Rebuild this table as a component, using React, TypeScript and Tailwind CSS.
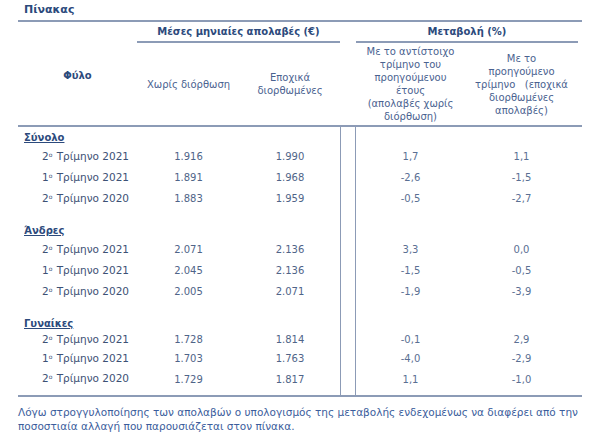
const sections = [
  {
    name: "Σύνολο",
    rows: [
      ["2", "2021", "1.916", "1.990", "1,7", "1,1"],
      ["1", "2021", "1.891", "1.968", "-2,6", "-1,5"],
      ["2", "2020", "1.883", "1.959", "-0,5", "-2,7"],
    ],
  },
  {
    name: "Άνδρες",
    rows: [
      ["2", "2021", "2.071", "2.136", "3,3", "0,0"],
      ["1", "2021", "2.045", "2.136", "-1,5", "-0,5"],
      ["2", "2020", "2.005", "2.071", "-1,9", "-3,9"],
    ],
  },
  {
    name: "Γυναίκες",
    rows: [
      ["2", "2021", "1.728", "1.814", "-0,1", "2,9"],
      ["1", "2021", "1.703", "1.763", "-4,0", "-2,9"],
      ["2", "2020", "1.729", "1.817", "1,1", "-1,0"],
    ],
  },
];

const cols = "grid grid-cols-[119px_103px_100px_16px_109px_113px]";

function Row({ r, h }: { r: string[]; h: string }) {
  return (
    <div className={`${cols} ${h} items-center`}>
      <div className="pl-6 text-[#3d5175] whitespace-nowrap text-[10.5px]">
        {r[0]}
        <span className="text-[6px] relative -top-[3px] mr-[1px]">ο</span> Τρίμηνο {r[1]}
      </div>
      <div className="text-center text-[#4f6488]">{r[2]}</div>
      <div className="text-center text-[#4f6488]">{r[3]}</div>
      <div className="h-full border-x border-[#8c9bb6]" />
      <div className="text-center text-[#5a6f93]">{r[4]}</div>
      <div className="text-center text-[#5a6f93]">{r[5]}</div>
    </div>
  );
}

function Heading({ name, h }: { name: string; h: string }) {
  return (
    <div className={`${cols} ${h} items-center`}>
      <div className="pl-1.5 font-bold underline text-[#2c4a7c]">{name}</div>
      <div />
      <div />
      <div className="h-full border-x border-[#8c9bb6]" />
      <div />
      <div />
    </div>
  );
}

function Spacer({ h }: { h: string }) {
  return (
    <div className={`${cols} ${h}`}>
      <div />
      <div />
      <div />
      <div className="h-full border-x border-[#8c9bb6]" />
      <div />
      <div />
    </div>
  );
}

export default function App() {
  return (
    <div className="w-[600px] h-[437px] bg-white text-[10px] font-['DejaVu_Sans',sans-serif] overflow-hidden">
      <div className="px-[18px]">
        <div className="h-[20px] flex items-center pl-1.5 font-bold text-[11px] text-[#2c4a7c]">Πίνακας</div>
        <div className="h-[2px] bg-[#8c9bb6]" />

        {/* header */}
        <div className="flex">
          <div className="w-[119px] pt-[46px] text-center font-bold text-[#2c4a7c]">Φύλο</div>
          <div className="flex flex-col">
            <div className="flex">
              <div className="w-[203px] flex flex-col">
                <div className="h-[19px] flex items-center justify-center font-bold text-[#2c4a7c]">
                  Μέσες μηνιαίες απολαβές (€)
                </div>
                <div className="h-[2px] bg-[#8c9bb6]" />
              </div>
              <div className="w-[16px]" />
              <div className="w-[222px] flex flex-col">
                <div className="h-[19px] flex items-center justify-center font-bold text-[#2c4a7c]">
                  Μεταβολή (%)
                </div>
                <div className="h-[2px] bg-[#8c9bb6]" />
              </div>
            </div>
            <div className="flex h-[82px] items-center text-center leading-[13px] text-[#4a6290]">
              <div className="w-[103px]">Χωρίς διόρθωση</div>
              <div className="w-[100px]">
                Εποχικά
                <br />
                διορθωμένες
              </div>
              <div className="w-[16px]" />
              <div className="w-[109px]">
                Με το αντίστοιχο
                <br />
                τρίμηνο του
                <br />
                προηγούμενου
                <br />
                έτους
                <br />
                (απολαβές χωρίς
                <br />
                διόρθωση)
              </div>
              <div className="w-[113px]">
                Με το
                <br />
                προηγούμενο
                <br />
                τρίμηνο&nbsp;&nbsp;&nbsp;(εποχικά
                <br />
                διορθωμένες
                <br />
                απολαβές)
              </div>
            </div>
          </div>
        </div>
        <div className="h-[2px] bg-[#8c9bb6]" />

        {/* body */}
        <Spacer h="h-[1px]" />
        <Heading name={sections[0].name} h="h-[18px]" />
        {sections[0].rows.map((r, i) => (
          <Row key={i} r={r} h="h-[21px]" />
        ))}
        <Spacer h="h-[12px]" />
        <Heading name={sections[1].name} h="h-[18px]" />
        {sections[1].rows.map((r, i) => (
          <Row key={i} r={r} h="h-[21px]" />
        ))}
        <Spacer h="h-[14px]" />
        <Heading name={sections[2].name} h="h-[14px]" />
        <Row r={sections[2].rows[0]} h="h-[19px]" />
        <Row r={sections[2].rows[1]} h="h-[19px]" />
        <Row r={sections[2].rows[2]} h="h-[22px]" />
        <Spacer h="h-[5px]" />
        <div className="h-[2px] bg-[#8c9bb6]" />

        <p className="mt-[8px] text-[10.5px] leading-[14px] text-[#3b5d9c] whitespace-nowrap">
          Λόγω στρογγυλοποίησης των απολαβών ο υπολογισμός της μεταβολής ενδεχομένως να διαφέρει από την
          <br />
          ποσοστιαία αλλαγή που παρουσιάζεται στον πίνακα.
        </p>
      </div>
    </div>
  );
}
